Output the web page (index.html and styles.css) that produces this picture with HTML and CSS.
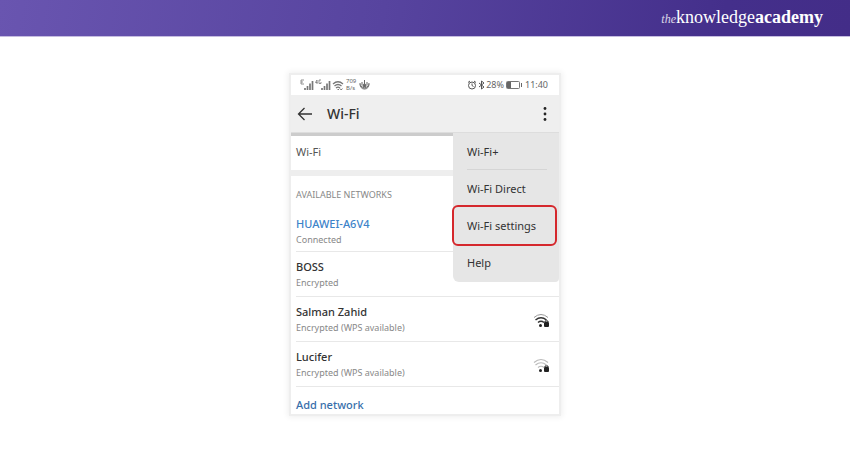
FILE: index.html
```html
<!DOCTYPE html>
<html lang="en">
<head>
<meta charset="utf-8">
<meta name="viewport" content="width=device-width, initial-scale=1">
<title>Wi-Fi settings</title>
<link rel="stylesheet" href="styles.css">
</head>
<body>
<header class="banner">
  <div class="logo"><i class="logo-the">the</i><span>knowledge</span><b>academy</b></div>
</header>
<main class="stage">
  <section class="phone">
    <div class="status">
      <div class="status-group">
        <svg width="45" height="14" viewBox="0 0 45 14" fill="none" stroke="#777">
          <path d="M4 2H1v4h3M1 4h2" stroke-width=".8"/>
          <path d="M5 12v-2M7.500 12V8M10 12V5.500M12.500 12V3" stroke-width="1.700"/>
          <path d="M17 2l-1.500 2.500h2M17 2v4M21 2h-2v3.500h2V4" stroke-width=".8"/>
          <path d="M22 12v-2M24.500 12V8M27 12V5.500M29.500 12V3" stroke-width="1.700"/>
          <path d="M33 6q5-4.500 10 0M34.500 8q3.500-3 7 0M36 10q2-1.600 4 0" stroke-width="1.300"/>
          <path d="M37.500 11.500h1.500M40 10.500l1.200 1.500 1.200-1.500"/>
        </svg>
        <span class="rate">709<br>B/s</span>
        <svg width="11" height="12" viewBox="0 0 11 12" fill="none" stroke="#666">
          <path d="M1 4q0 6 4.500 6T10 4M1 5.500q2 3.500 4.500 3.500T10 5.500M5.500 1v4M3 3v3M8 3v3"/>
          <circle cx="5.500" cy="6.500" r="1.500" fill="#666"/>
        </svg>
      </div>
      <div class="status-group status-right">
        <svg width="10" height="10" viewBox="0 0 10 10" fill="none" stroke="#555"><circle cx="5" cy="5.500" r="3.500"/><path d="M1 2.500L3 1M9 2.500L7 1M5 3.500v2l1.500 1"/></svg>
        <svg width="7" height="10" viewBox="0 0 7 10" fill="none" stroke="#555"><path d="M1 3l5 4-2.500 2V1L6 3 1 7"/></svg>
        <span>28%</span>
        <svg class="battery" width="17" height="8" viewBox="0 0 17 8"><rect x=".5" y=".5" width="13" height="7" rx="1" fill="none" stroke="#777"/><path d="M1 1h4v6H1zM15 2h1v4h-1z" fill="#666"/></svg>
        <span>11:40</span>
      </div>
    </div>
    <div class="appbar">
      <button class="icon-button" aria-label="Back"><svg width="16" height="14" viewBox="0 0 16 14" fill="none" stroke="#333" stroke-width="1.300"><path d="M7.500 1L1.500 7l6 6M1.500 7H15"/></svg></button>
      <h1>Wi-Fi</h1>
      <button class="icon-button more" aria-label="More"><svg width="4" height="16" viewBox="0 0 4 16" fill="#222"><circle cx="2" cy="2.500" r="1.400"/><circle cx="2" cy="8" r="1.400"/><circle cx="2" cy="13.500" r="1.400"/></svg></button>
    </div>
    <div class="toggle-row">Wi-Fi</div>
    <h2>AVAILABLE NETWORKS</h2>
    <ul class="networks">
      <li><div><strong class="connected">HUAWEI-A6V4</strong><small>Connected</small></div></li>
      <li><div><strong>BOSS</strong><small>Encrypted</small></div></li>
      <li><div><strong>Salman Zahid</strong><small>Encrypted (WPS available)</small></div>
        <svg width="17" height="15" viewBox="0 0 17 15" fill="none"><path d="M1 4.500q7-6 14 0" stroke="#999"/><path d="M2.500 7q5.500-4.500 11 0M5 9.500q3-2.500 6 0" stroke="#333" stroke-width="1.500"/><circle cx="7.500" cy="12.500" r="1.500" fill="#222"/><rect x="11" y="9" width="5" height="5" rx="1" fill="#222"/><path d="M12 9V8h3v1" stroke="#222"/></svg></li>
      <li><div><strong>Lucifer</strong><small>Encrypted (WPS available)</small></div>
        <svg width="17" height="15" viewBox="0 0 17 15" fill="none"><path d="M1 4.500q7-6 14 0M2.500 7q5.500-4.500 11 0M5 9.500q3-2.500 6 0" stroke="#bbb" stroke-width="1.200"/><circle cx="7.500" cy="12.500" r="1.500" fill="#222"/><rect x="11" y="9" width="5" height="5" rx="1" fill="#222"/><path d="M12 9V8h3v1" stroke="#222"/></svg></li>
    </ul>
    <a class="add" href="#">Add network</a>
    <div class="menu">
      <button>Wi-Fi+</button>
      <button>Wi-Fi Direct</button>
      <button class="highlighted">Wi-Fi settings</button>
      <button>Help</button>
    </div>
  </section>
</main>
</body>
</html>
```
FILE: styles.css
```css
* { box-sizing: border-box; }
body {
  margin: 0;
  background: #fff;
  color: #333;
  font-family: "Noto Sans", sans-serif;
  font-size: 11px;
  line-height: 16px;
}
button { border: 0; padding: 0; background: none; font: inherit; color: inherit; }
svg { display: block; flex: none; }
.banner {
  display: flex;
  align-items: center;
  justify-content: flex-end;
  height: 37px;
  padding-right: 27px;
  background: linear-gradient(100deg, #6955b0, #57449f 45%, #442f8b 85%, #432d88);
  border-bottom: 1px solid #c5bce0;
}
.logo { color: #fff; font: 18px/20px "Liberation Serif", serif; }
.logo-the { font-size: 12px; opacity: .8; }
.stage { padding: 38px 16px; }
.phone {
  position: relative;
  max-width: 268px;
  margin: 0 auto;
  padding-bottom: 1px;
  background: #fff;
  box-shadow: 0 0 0 2px #eee, 0 0 6px 3px #eee;
}
.status {
  display: flex;
  justify-content: space-between;
  align-items: center;
  height: 20px;
  padding: 0 11px 0 9px;
  color: #666;
  font-size: 9px;
}
.status-group { display: flex; align-items: center; }
.rate { margin: 0 3px 0 1px; font-size: 6px; line-height: 7px; }
.status-right { gap: 1px; }
.battery { margin: 0 1px; }
.appbar {
  display: flex;
  align-items: center;
  height: 38px;
  padding: 0 12px 0 6px;
  background: #efefef;
  border-bottom: 1px solid #ddd;
}
.icon-button { display: flex; }
.more { margin-left: auto; }
h1 { margin: 0 0 0 14px; font-size: 14px; font-weight: 500; line-height: 20px; }
.toggle-row {
  height: 43px;
  padding: 8px 5px;
  color: #555;
  border-top: 3px solid #ccc;
  border-bottom: 6px solid #eee;
}
h2 { margin: 0; padding: 11px 5px 7px; color: #888; font-size: 9px; font-weight: 400; line-height: 16px; }
.networks { margin: 0; padding: 0 0 0 5px; list-style: none; }
.networks li {
  display: flex;
  align-items: center;
  justify-content: space-between;
  height: 45px;
  padding: 2px 9px 0 0;
  border-bottom: 1px solid #e8e8e8;
}
.networks li:first-child { height: 42px; }
strong, small { display: block; line-height: 16px; }
strong { font-size: 11px; font-weight: 500; }
small { color: #888; font-size: 9px; }
.connected { color: #3d83c9; }
.add { display: block; padding: 10px 5px 0; color: #386fab; font-weight: 500; text-decoration: none; }
.menu {
  position: absolute;
  top: 58px;
  right: 0;
  width: 106px;
  padding: 0 4px 1px 1px;
  border-radius: 0 0 4px 6px;
  background: #e6e6e6;
}
.menu button {
  display: block;
  width: 100%;
  height: 37px;
  padding-left: 13px;
  text-align: left;
}
.menu button:first-child {
  background: linear-gradient(#d5d5d5, #d5d5d5) 13px 100% / 80px 1px no-repeat;
}
.menu .highlighted {
  outline: 2px solid #d5282d;
  border-radius: 4px;
}
```
